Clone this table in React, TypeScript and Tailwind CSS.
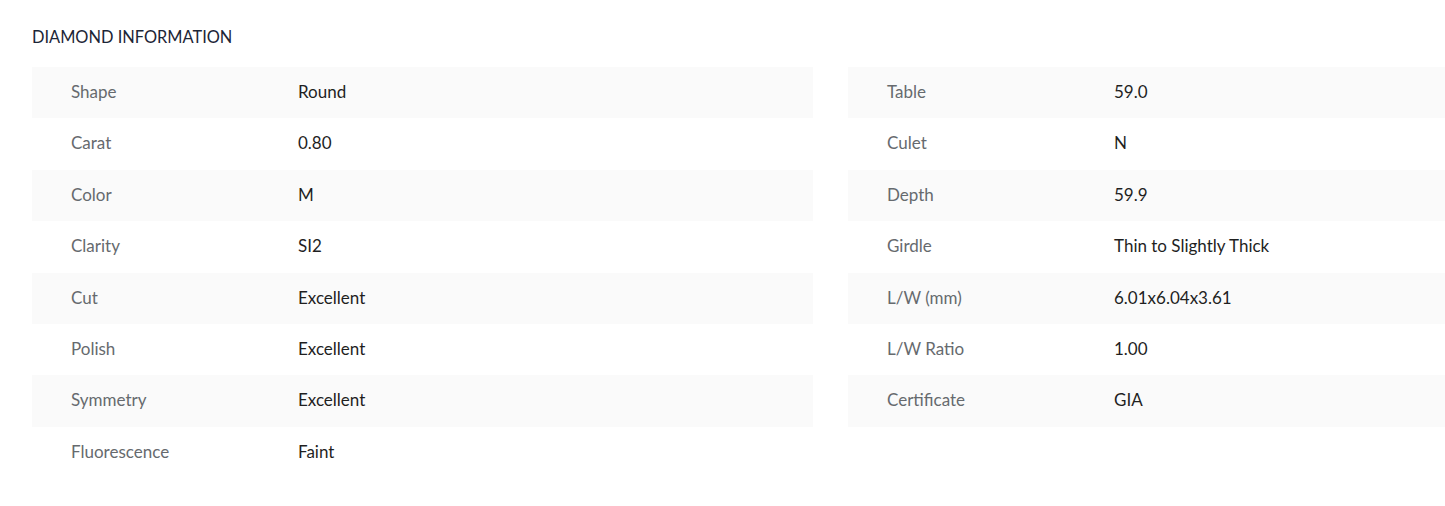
const left = [
  ["Shape", "Round"],
  ["Carat", "0.80"],
  ["Color", "M"],
  ["Clarity", "SI2"],
  ["Cut", "Excellent"],
  ["Polish", "Excellent"],
  ["Symmetry", "Excellent"],
  ["Fluorescence", "Faint"],
];

const right = [
  ["Table", "59.0"],
  ["Culet", "N"],
  ["Depth", "59.9"],
  ["Girdle", "Thin to Slightly Thick"],
  ["L/W (mm)", "6.01x6.04x3.61"],
  ["L/W Ratio", "1.00"],
  ["Certificate", "GIA"],
];

function SpecTable({ rows }: { rows: string[][] }) {
  return (
    <div className="flex flex-col">
      {rows.map(([label, value], i) => (
        <div
          key={label}
          className={`flex items-center h-[51.4px] pb-[2px] ${i % 2 === 0 ? "bg-[#fafafa]" : "bg-white"}`}
        >
          <span className="w-[266px] pl-[39px] text-[#666a6e]">{label}</span>
          <span className="text-[#1f1f1f]">{value}</span>
        </div>
      ))}
    </div>
  );
}

export default function App() {
  return (
    <div className="bg-white h-[506px] overflow-hidden pl-8 pt-[27px] font-['Lato','Noto_Sans',sans-serif] text-[17px]">
      <h2 className="text-[#1c2536] text-[16.4px] leading-5 mb-5">DIAMOND INFORMATION</h2>
      <div className="grid grid-cols-[781px_1fr] gap-[35px]">
        <SpecTable rows={left} />
        <SpecTable rows={right} />
      </div>
    </div>
  );
}
